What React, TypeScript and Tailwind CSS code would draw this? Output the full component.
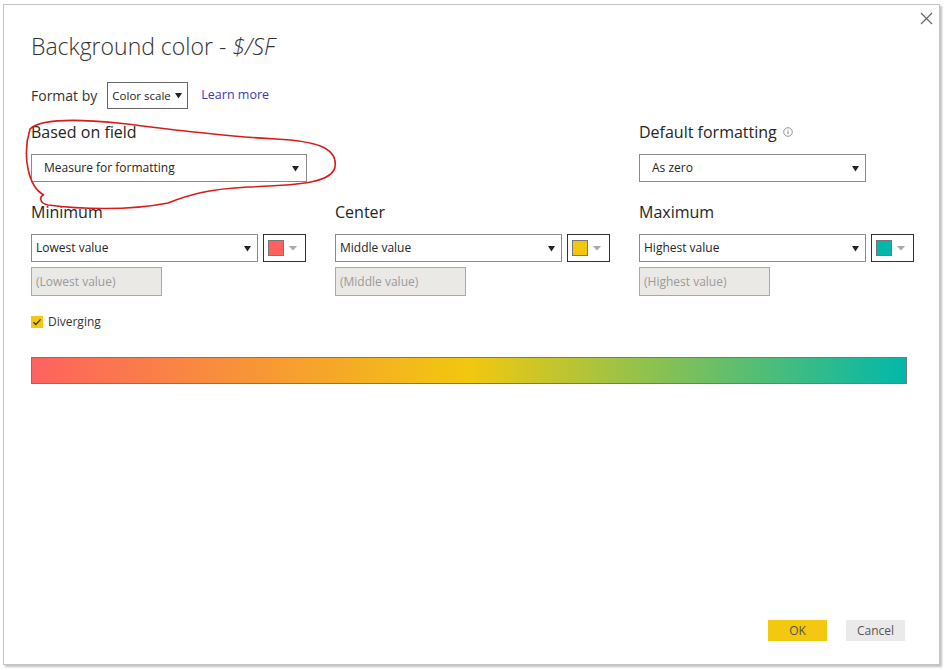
import React from 'react';

const font = { fontFamily: '"Open Sans", "Noto Sans", sans-serif' };

function Caret() {
  return (
    <svg width="7" height="7" viewBox="0 0 7 7" className="shrink-0">
      <path d="M0 1h7L3.5 6.5z" fill="#222" />
    </svg>
  );
}

function Select({ label, className }: { label: string; className: string }) {
  return (
    <div
      className={`flex h-[28px] items-center justify-between border border-[#8a8a8a] bg-white pl-[4px] pr-[6px] text-[12px] text-[#252525] ${className}`}
    >
      <span>{label}</span>
      <Caret />
    </div>
  );
}

function Swatch({ color }: { color: string }) {
  return (
    <div className="flex h-[28px] w-[43px] items-center gap-[5px] border border-[#333] bg-white pl-[4px]">
      <div className="h-[16px] w-[16px] border border-[#777]" style={{ background: color }} />
      <svg width="8" height="5" viewBox="0 0 8 5">
        <path d="M0 0h8L4 4.5z" fill="#a8a8a8" />
      </svg>
    </div>
  );
}

function Stop({ title, value, color }: { title: string; value: string; color: string }) {
  return (
    <div className="flex flex-col">
      <div className="h-[20px] text-[16px] leading-[20px] text-[#252525]">{title}</div>
      <div className="mt-[12px] flex gap-[5px]">
        <Select label={value} className="w-[227px]" />
        <Swatch color={color} />
      </div>
      <div className="mt-[5px] flex h-[29px] w-[131px] items-center border border-[#a9a9a9] bg-[#eae9e6] pl-[4px] text-[12px] text-[#9a9a9a]">
        ({value})
      </div>
    </div>
  );
}

export default function App() {
  return (
    <div className="h-[670px] w-[945px] bg-white" style={font}>
      <div className="pl-[3px] pt-[4px]">
        <div className="relative flex h-[661px] w-[937px] flex-col border border-[#c4c4c4] bg-white pl-[27px] pr-[34px] pt-[25px] pb-[23px] shadow-[2px_2px_2px_rgba(0,0,0,0.25)]">
          <button className="absolute right-[6px] top-[7px] text-[#666]">
            <svg width="13" height="13" viewBox="0 0 13 13">
              <path d="M1 1l11 11M12 1L1 12" stroke="#666" strokeWidth="1.2" />
            </svg>
          </button>

          <div className="h-[32px] text-[23px] font-light leading-[32px] text-[#333]">
            Background color - <span className="italic">$/SF</span>
          </div>

          <div className="mt-[20px] flex items-center">
            <span className="text-[14px] text-[#333]">Format by</span>
            <div className="ml-[10px] flex h-[27px] w-[81px] items-center justify-between border border-[#666] pl-[4px] pr-[5px] text-[11.5px] text-[#252525]">
              <span>Color scale</span>
              <Caret />
            </div>
            <span className="ml-[13px] text-[12.5px] text-[#3a3ab5]">Learn more</span>
          </div>

          <div className="mt-[13px] grid grid-cols-[275px_275px_275px] gap-x-[29px]">
            <div className="flex flex-col">
              <div className="h-[20px] text-[16px] leading-[20px] text-[#252525]">Based on field</div>
              <Select label="Measure for formatting" className="mt-[12px] w-[276px] pl-[12px] pr-[7px]" />
            </div>
            <div />
            <div className="flex flex-col">
              <div className="flex h-[20px] items-center gap-[6px] text-[16px] leading-[20px] text-[#252525]">
                Default formatting
                <svg width="10" height="10" viewBox="0 0 10 10">
                  <circle cx="5" cy="5" r="4.3" fill="none" stroke="#777" strokeWidth="0.8" />
                  <path d="M5 4.2v3M5 2.5v0.9" stroke="#777" strokeWidth="0.9" />
                </svg>
              </div>
              <Select label="As zero" className="mt-[12px] w-[227px] pl-[12px]" />
            </div>
          </div>

          <div className="mt-[20px] grid grid-cols-[275px_275px_275px] gap-x-[29px]">
            <Stop title="Minimum" value="Lowest value" color="#fd625e" />
            <Stop title="Center" value="Middle value" color="#f2c80f" />
            <Stop title="Maximum" value="Highest value" color="#01b8aa" />
          </div>

          <div className="mt-[20px] flex h-[12px] items-center gap-[5px]">
            <div className="flex h-[12px] w-[12px] items-center justify-center bg-[#f2c811]">
              <svg width="10" height="10" viewBox="0 0 10 10">
                <path d="M1.5 5.2l2.3 2.3L8.6 2.4" fill="none" stroke="#333" strokeWidth="1.3" />
              </svg>
            </div>
            <span className="text-[12px] leading-[12px] text-[#333]">Diverging</span>
          </div>

          <div className="mt-[29px] h-[27px] w-[876px] border border-[#777] bg-[linear-gradient(to_right,#fd625e,#f2c80f_50%,#01b8aa)]" />

          <div className="mt-auto flex justify-end gap-[19px]">
            <button className="h-[21px] w-[59px] bg-[#f2c811] text-[12px] text-[#555]">OK</button>
            <button className="h-[21px] w-[59px] bg-[#eaeaea] text-[12px] text-[#555]">Cancel</button>
          </div>

          <svg
            className="pointer-events-none absolute left-[14px] top-[110px]"
            width="324"
            height="100"
            viewBox="0 0 324 100"
          >
            <path
              d="M12 14 C 22 4, 60 4, 100 8 C 150 14, 210 22, 258 24 C 296 26, 320 32, 317 52 C 314 66, 290 70, 230 72 C 190 74, 170 80, 150 88 C 110 96, 60 94, 30 90 C 20 88, 22 80, 26 80 C 10 72, 4 40, 12 14 Z"
              fill="none"
              stroke="#d91b1b"
              strokeWidth="1.6"
            />
          </svg>
        </div>
      </div>
    </div>
  );
}
